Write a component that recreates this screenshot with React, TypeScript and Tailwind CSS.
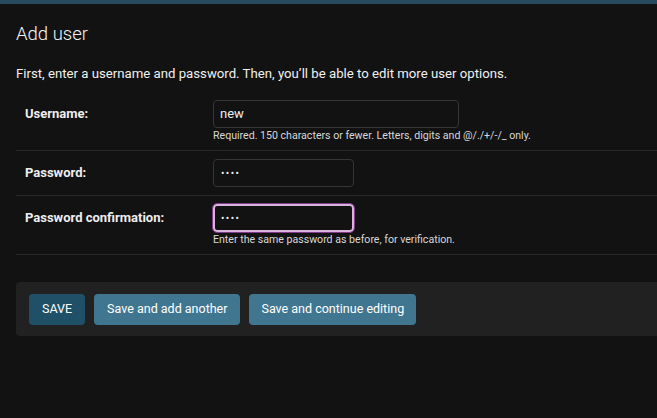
export default function App() {
    const font = { fontFamily: "Roboto, 'Liberation Sans', sans-serif" };

    return (
        <div className="w-[657px] h-[418px] overflow-hidden bg-[#121212] text-[#eeeeee]" style={font}>
            {/* header strip */}
            <div className="h-1 bg-[#264b5d]" />

            <div className="pl-4">
                <h1 className="pt-[18px] text-[18.5px] font-light leading-6 text-[#f5f5f5]">Add user</h1>
                <p className="mt-[18px] text-[13.2px] leading-5 text-[#f0f0f0]">
                    First, enter a username and password. Then, you’ll be able to edit more user options.
                </p>

                <div className="mt-[6px]">
                    {/* Username */}
                    <div className="flex pt-[10px] pb-[7px] border-b border-[#272727]">
                        <label className="w-[197px] pl-[9px] h-7 flex items-center text-[13px] font-bold text-[#eeeeee]">
                            Username:
                        </label>
                        <div className="flex flex-col">
                            <div className="w-[246px] h-7 rounded-[4px] border border-[#353535] bg-[#121212] px-[6px] flex items-center text-[13px] text-[#eeeeee]">
                                new
                            </div>
                            <div className="mt-[1px] text-[10.6px] leading-[14px] text-[#d8d8d8]">
                                Required. 150 characters or fewer. Letters, digits and @/./+/-/_ only.
                            </div>
                        </div>
                    </div>

                    {/* Password */}
                    <div className="flex pt-2 pb-2 border-b border-[#272727]">
                        <label className="w-[197px] pl-[9px] h-7 flex items-center text-[13px] font-bold text-[#eeeeee]">
                            Password:
                        </label>
                        <div className="w-[141px] h-7 rounded-[4px] border border-[#353535] bg-[#121212] px-[7px] flex items-center text-[10px] tracking-[1.5px] text-[#eeeeee]">
                            ••••
                        </div>
                    </div>

                    {/* Password confirmation */}
                    <div className="flex pt-2 pb-[7px] border-b border-[#272727]">
                        <label className="w-[197px] pl-[9px] h-7 flex items-center text-[13px] font-bold text-[#eeeeee]">
                            Password confirmation:
                        </label>
                        <div className="flex flex-col">
                            <div className="w-[141px] h-7 rounded-[4px] border-2 border-[#d9b3dd] outline outline-1 outline-[#7d3c86] bg-[#121212] px-[6px] flex items-center text-[10px] tracking-[1.5px] text-[#eeeeee]">
                                ••••
                            </div>
                            <div className="mt-[1px] text-[10.6px] leading-[14px] text-[#d8d8d8]">
                                Enter the same password as before, for verification.
                            </div>
                        </div>
                    </div>
                </div>

                {/* Submit row */}
                <div className="mt-[27px] h-[54px] rounded-l-[4px] bg-[#212121] flex items-center gap-[9px] pl-[13px]">
                    <button className="h-[31px] px-[13px] rounded-[4px] bg-[#205067] text-[12.5px] text-white">
                        SAVE
                    </button>
                    <button className="h-[31px] px-[13px] rounded-[4px] bg-[#417690] text-[12.5px] text-white">
                        Save and add another
                    </button>
                    <button className="h-[31px] px-[12px] rounded-[4px] bg-[#417690] text-[12.5px] text-white">
                        Save and continue editing
                    </button>
                </div>
            </div>
        </div>
    );
}
